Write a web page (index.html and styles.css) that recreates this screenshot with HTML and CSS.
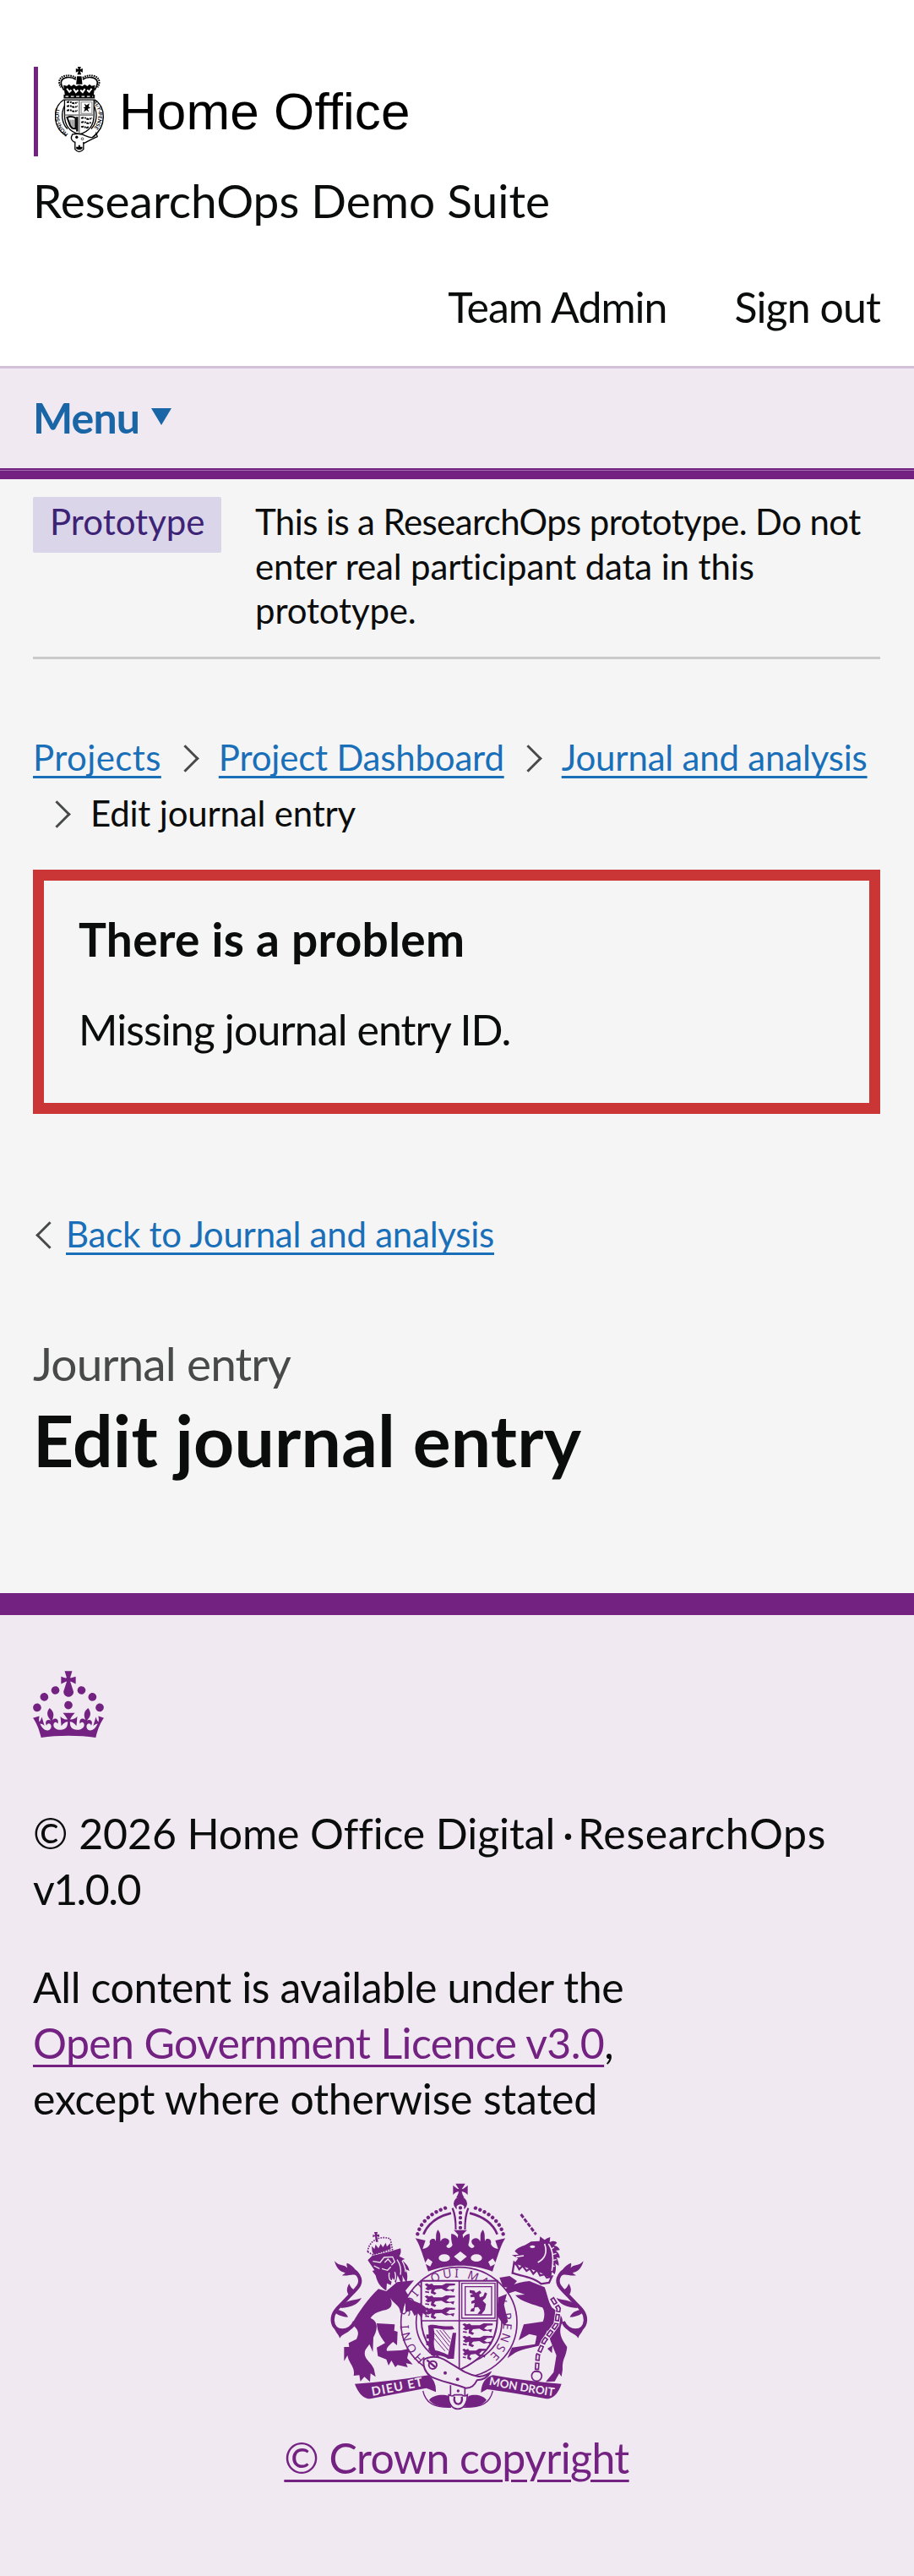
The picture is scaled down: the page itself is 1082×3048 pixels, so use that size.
FILE: index.html
```html
<!DOCTYPE html>
<html lang="en">
<head>
  <meta charset="UTF-8">
  <meta name="viewport" content="width=device-width, initial-scale=1.0">
  <title>Edit journal entry - ResearchOps Demo Suite</title>
  <link rel="stylesheet" href="styles.css">
</head>
<body>
  <header class="header">
    <div class="logo">
      <svg class="logo-crest" viewBox="45 24 176 308" aria-hidden="true">
        <!-- crown -->
        <path d="M125 27h12l-3 9 9-3v14l-9-4 4 12h-14l4-12-9 4V33l9 3z"/>
        <path d="M123 61h16l3 28h-22z"/>
        <g fill="none" stroke="#000" stroke-width="5">
          <path d="M119 72C100 60 72 62 67 80c-2 12 4 20 10 30M143 72c19-12 47-10 52 8 2 12-4 20-10 30"/>
          <path d="M119 66C98 52 62 56 60 80c0 10 4 16 6 20M143 66c21-14 57-10 59 14 0 10-4 16-6 20" stroke-width="6" stroke-dasharray="5 3"/>
        </g>
        <path d="M75 92l12 3 8-6 7 7 10-6 8 6 11-5 11 5 8-6 10 6 7-7 8 6 12-3-5 34H80z"/>
        <path d="M87 104l9 12 7-7M111 105l8 12 8-8M151 105l-8 12-8-8M175 104l-9 12-7-7" fill="none" stroke="#fff" stroke-width="6"/>
        <path d="M76 126q55-8 110 0v13H76z"/>
        <path d="M82 132h98" stroke="#fff" stroke-width="4" stroke-dasharray="11 8"/>
        <!-- garter -->
        <g fill="none" stroke="#000" stroke-width="4">
          <path d="M77 143C35 170 34 240 85 272M185 143c42 27 43 97-6 132"/>
          <path d="M79 165c-14 28-10 62 10 82M183 165c14 28 10 62-10 82"/>
        </g>
        <path id="small-garter" d="M92 265C48 225 52 170 83 142" fill="none"/>
        <path id="small-garter-r" d="M179 150C208 185 207 232 160 265" fill="none"/>
        <text class="garter-small"><textPath href="#small-garter">HONI·SOIT</textPath></text>
        <text class="garter-small"><textPath href="#small-garter-r">AL·Y·PENSE</textPath></text>
        <!-- shield -->
        <path d="M79 144h104v54c0 38-22 60-52 68-30-8-52-30-52-68z" fill="#fff" stroke="#000" stroke-width="4"/>
        <path d="M131 146v118M80 198h102" stroke="#888" stroke-width="5"/>
        <g fill="none" stroke="#000" stroke-width="6" stroke-dasharray="9 3 5 2">
          <path d="M87 153q10-4 18 1t20-2M87 167q10-4 18 1t20-2M87 182q10-4 18 1t20-2"/>
          <path d="M138 209q10-4 18 1t20-2M138 224q10-4 18 1t17-2M138 240q10-4 14 1t12-2"/>
        </g>
        <path d="M138 152h38v40h-38z" fill="none" stroke="#888" stroke-width="3"/>
        <path d="M149 157l8 6 10-7-3 12 7 5-10 3 4 11-9-7-9 7 4-12-6-4 8-2z"/>
        <path d="M88 206q15-6 30 2v38q-18 0-22-18z" fill="none" stroke="#000" stroke-width="6"/>
        <path d="M99 214v22M105 214v26M111 214v26" stroke="#000" stroke-width="2"/>
        <path d="M120 204h7v52h-7z"/>
        <!-- buckle -->
        <path d="M107 266q30-6 48 6 28 14 36-10l4 12q-26 12-48 24-16 4-36-6-14-8-4-26z" fill="#fff" stroke="#000" stroke-width="4"/>
        <circle cx="122" cy="276" r="5"/>
        <circle cx="142" cy="282" r="4" fill="none" stroke="#000" stroke-width="2"/>
        <path d="M116 293v26q14 18 30 0v-26" fill="#fff" stroke="#000" stroke-width="4"/>
        <path d="M128 304h6v6h8v6q-11 9-22 0v-6h8z"/>
      </svg>
      <span class="logo-name">Home Office</span>
    </div>
    <p class="service-name">ResearchOps Demo Suite</p>
    <ul class="account-nav">
      <li class="team">Team Admin</li>
      <li class="sign-out">Sign out</li>
    </ul>
  </header>

  <nav class="service-nav">
    <button type="button" class="menu-button">Menu</button>
  </nav>
  <div class="nav-rule"></div>

  <main class="main">
    <div class="phase-banner">
      <strong class="tag">Prototype</strong>
      <span class="phase-text">This is a ResearchOps prototype. Do not<br><span class="phase-line">enter real participant data in this</span><br><span class="phase-line">prototype.</span></span>
    </div>

    <ol class="breadcrumbs">
      <li><a class="crumb-projects" href="#">Projects</a></li>
      <li><a href="#">Project Dashboard</a></li>
      <li><a href="#">Journal and analysis</a></li>
      <li>Edit journal entry</li>
    </ol>

    <div class="error-summary">
      <h2>There is a problem</h2>
      <p>Missing journal entry ID.</p>
    </div>

    <div class="back">
      <a href="#">Back to Journal and analysis</a>
    </div>

    <span class="caption">Journal entry</span>
    <h1>Edit journal entry</h1>
  </main>

  <footer class="footer">
    <svg class="footer-crown" viewBox="0 0 32 30" aria-hidden="true">
      <path fill="currentColor" d="M22.6 10.4c-1 .4-2-.1-2.4-1-.4-.9.1-2 1-2.4.9-.4 2 .1 2.4 1s-.1 2-1 2.4m-5.9 6.7c-.9.4-2-.1-2.4-1-.4-.9.1-2 1-2.4.9-.4 2 .1 2.4 1s-.1 2-1 2.4m10.8-3.7c-1 .4-2-.1-2.4-1-.4-.9.1-2 1-2.4.9-.4 2 .1 2.4 1s0 2-1 2.4m3.3 4.8c-1 .4-2-.1-2.4-1-.4-.9.1-2 1-2.4.9-.4 2 .1 2.4 1s-.1 2-1 2.4M17 4.7l2.3 1.2V2.5l-2.3.7-.2-.2.9-3h-3.4l.9 3-.2.2c-.1.1-2.3-.7-2.3-.7v3.4L15 4.7c.1.1.1.2.2.2l-1.3 4c-.1.2-.1.4-.1.6 0 1.1.8 2 1.9 2.2h.7c1-.2 1.9-1.1 1.9-2.1 0-.2 0-.4-.1-.6l-1.3-4c-.1-.2 0-.2.1-.3m-7.6 5.7c.9.4 2-.1 2.4-1 .4-.9-.1-2-1-2.4-.9-.4-2 .1-2.4 1s0 2 1 2.4m-5 3c.9.4 2-.1 2.4-1 .4-.9-.1-2-1-2.4-.9-.4-2 .1-2.4 1s.1 2 1 2.4m-3.2 4.8c.9.4 2-.1 2.4-1 .4-.9-.1-2-1-2.4-.9-.4-2 .1-2.4 1s0 2 1 2.4m14.8 11c4.4 0 8.6.3 12.3.8 1.1-4.5 2.4-7 3.7-8.8l-2.5-.9c.2 1.3.3 1.9 0 2.7-.4-.4-.8-1.1-1.1-2.3l-1.2 4c.7-.5 1.3-.8 2-.9-1.1 2.5-2.6 3.1-3.5 3-1.1-.2-1.7-1.2-1.5-2.1.3-1.2 1.5-1.5 2.1-.1 1.1-2.3-.8-3-2-2.3 1.9-1.9 2.1-3.5.6-5.6-2.1 1.6-2.1 3.2-1.2 5.5-1.2-1.4-3.2-.6-2.5 1.6.9-1.4 2.1-.5 1.9.8-.2 1.1-1.7 2.1-3.5 1.9-2.7-.2-2.9-2.1-2.9-3.6.7-.1 1.9.5 2.9 1.9l.4-4.3c-1.1 1.1-2.1 1.4-3.2 1.4.4-1.2 2.1-3 2.1-3h-5.4s1.7 1.9 2.1 3c-1.1 0-2.1-.2-3.2-1.4l.4 4.3c1-1.4 2.2-2 2.9-1.9-.1 1.5-.2 3.4-2.9 3.6-1.9.2-3.4-.8-3.5-1.9-.2-1.3 1-2.2 1.9-.8.7-2.3-1.2-3-2.5-1.6.9-2.2.9-3.9-1.2-5.5-1.5 2-1.3 3.7.6 5.6-1.2-.7-3.1 0-2 2.3.6-1.4 1.8-1.1 2.1.1.2.9-.3 1.9-1.5 2.1-.9.2-2.4-.5-3.5-3 .6 0 1.2.3 2 .9l-1.2-4c-.3 1.1-.7 1.9-1.1 2.3-.3-.8-.2-1.4 0-2.7l-2.9.9C1.3 23 2.6 25.5 3.7 30c3.7-.5 7.9-.8 12.3-.8"/>
    </svg>
    <p class="footer-copy">© 2026 Home Office Digital<span class="dot"> · </span><span class="product">ResearchOps</span> <span class="version">v1.0.0</span></p>
    <p class="licence">All content is available under the<br><a class="ogl" href="#">Open Government Licence v3.0</a>,<br><span class="except">except where otherwise stated</span></p>

    <div class="copyright">
      <svg class="arms" viewBox="45 65 936 810" aria-hidden="true">
        <defs>
          <g id="passant">
            <path d="M0 4l8-4 8 4 10-3 6 6 30 0 14-7 32 1v6l-26 2-8 8 14 6 18-3-4 12-10-6-16 2-16-9-22 2-6 8 10 6-6 6-14-6 2-14-12 4-10-6 8-6z"/>
            <path d="M2 30l14 2M68 22l18-14" fill="none" stroke="#732282" stroke-width="5"/>
          </g>
          <g id="tail">
            <path d="M150 560C135 600 75 605 71 555C69 520 105 500 130 470C160 440 180 425 162 395C150 374 125 372 110 380" fill="none" stroke="#732282" stroke-width="13"/>
            <path d="M78 345C95 365 110 355 124 370C122 362 120 358 122 352C142 358 160 380 160 400C145 385 130 400 104 396C110 392 114 390 116 386C98 384 84 370 78 345zM130 468C118 450 122 440 130 425C136 442 148 450 158 448zM104 500C130 480 150 486 174 476C160 500 140 508 100 512zM88 518C104 520 120 528 126 544C112 544 96 540 82 530zM72 570C90 600 120 596 136 588C118 606 104 604 97 619C92 605 80 598 72 570z"/>
          </g>
        </defs>

        <!-- crown -->
        <path d="M508 70h34c-4 9-10 14-12 20 8-2 14-8 21-14v34c-7-6-13-11-21-12 1 8 4 14 9 22h-29c5-8 8-14 9-22-8 1-14 6-20 12V76c7 6 13 12 21 14-2-6-8-11-12-20z"/>
        <circle cx="525" cy="141" r="24"/>
        <g fill="none" stroke="#732282">
          <path d="M373 249C385 205 425 168 488 152M677 249C665 205 625 168 562 152" stroke-width="13" stroke-linecap="round" stroke-dasharray="0.1 17.5"/>
          <path d="M394 250C408 215 440 188 492 175M656 250C642 215 610 188 558 175" stroke-width="8"/>
          <path d="M497 157c9 22 12 46 12 76M553 157c-9 22-12 46-12 76" stroke-width="7"/>
        </g>
        <path d="M512 150q13-12 26 0v86h-26z" fill="#f0e9f1"/>
        <path d="M525 156v74" fill="none" stroke="#732282" stroke-width="13" stroke-linecap="round" stroke-dasharray="0.1 17.5"/>
        <path d="M365 264l36 8-10 30c14-2 22-8 26-18-4-12 4-20 14-18 4 2 6 6 6 10 4-16-2-26 8-42 14 16 6 26 10 42 4-14 22-16 30-4 2 12-6 14-10 20 6 12 18 6 22-4-4-14-6-26-4-40 12 2 20 8 22 16l2-12c-4-6-10-12-16-17h48c-6 5-12 11-16 17l2 12c2-8 10-14 22-16 2 14 0 26-4 40 4 10 16 16 22 4-4-6-12-8-10-20 8-12 26-10 30 4 4-16-4-26 10-42 10 16 4 26 8 42 0-4 2-8 6-10 10-2 18 6 14 18 4 10 12 16 26 18l-10-30 36-8c-12 16-20 40-46 118-70-28-158-28-228 0C385 304 377 280 365 264z"/>
        <g fill="#f0e9f1">
          <path d="M525 311l23 18-23 19-23-19zM410 336l16 12-8 16-20-10zM640 336l-16 12 8 16 20-10z"/>
          <ellipse cx="468" cy="334" rx="20" ry="13"/>
          <ellipse cx="582" cy="334" rx="20" ry="13"/>
        </g>

        <!-- supporters' tails -->
        <use href="#tail"/>
        <use href="#tail" transform="translate(1040 0) scale(-1 1)"/>

        <!-- lion -->
        <path d="M196 312c2-36 40-60 80-46l8 38-72 18z" fill="none" stroke="#732282" stroke-width="5" stroke-dasharray="5 4"/>
        <path d="M219 242l12 0-2 10 8-2v10l-8-3 4 20h-8l-3-20-8 4v-10l8 3zM212 312l-2-20 10 10 4-16 10 14 8-16 8 12 10-16 4 14 12-12 2 20-60 20z"/>
        <path d="M196 342l16-16 66-16 34-10c4 12 0 22-4 28l20 10-10 4C334 356 340 364 344 380L330 374C338 390 338 400 334 424L318 396C322 412 320 420 316 428L302 396 296 424 284 404 278 430 264 424 262 450C244 440 230 424 224 396L212 380 220 378 196 342z"/>
        <g fill="none" stroke="#f0e9f1" stroke-width="4">
          <path d="M214 346l26 4 14-18 30-2 8 18-12 12M246 372l20 6 12-12M218 362l20 10M256 350l12-12 12 14M272 386c-2 16 0 30 12 30 14 0 12-20 8-32M300 340c14 20 16 34 12 54M318 344c8 14 12 26 12 40"/>
        </g>
        <path d="M234 444L262 452 300 420 360 414 330 450C350 488 380 488 402 510L404 546 388 530 378 546 362 524 342 540 330 520 312 530C310 500 290 500 276 476C286 500 280 512 262 518C230 524 216 532 206 548C236 560 230 590 216 616L214 668 202 640 188 660C176 690 206 700 218 728L224 756 206 744 204 774 184 756 170 772 166 750 146 752C152 720 130 712 124 680L112 700 112 650 130 650 128 636 156 622C172 590 150 580 140 568C168 520 196 480 234 444z"/>
        <path d="M228 566l64 4-2 22 12 4-2 48-14-12c-14 12-26 22-22 32l50-2 30-6-8 34 20 22-24-4 6 14-36-8-8 8-14-24-10 18-8-22-30-12-4-30 30-16c-14-20-28-36-30-70z"/>

        <!-- unicorn -->
        <path d="M740 179l54 72" fill="none" stroke="#732282" stroke-width="9" stroke-dasharray="15 5"/>
        <path d="M718 310C730 296 742 294 756 288L776 276 806 274 808 258 824 270C836 262 838 262 844 260L842 278C856 272 862 274 868 280L858 290C870 292 876 298 878 306L864 308C874 316 878 324 878 334L866 332C872 344 876 354 874 362L862 354C866 370 864 380 860 392L850 384 846 410C828 388 780 376 716 354L730 336 708 324 732 322z"/>
        <path d="M824 284c10 28 6 50-24 66M838 284c18 24 18 60 12 96M722 330l28-4" fill="none" stroke="#f0e9f1" stroke-width="5"/>
        <path d="M858 296l-10 6M866 318l-14 4M866 340l-12 2M860 364l-8-2" stroke="#f0e9f1" stroke-width="4"/>
        <ellipse cx="781" cy="294" rx="9" ry="5" fill="#f0e9f1"/>
        <path d="M716 350l10 10 8 14 12-12 14 18 12-8 12 18 14-14 10 20 16-4 8 12 18-4-10 22-28 4c-24-20-62-28-102-38z" fill="#f0e9f1" stroke="#732282" stroke-width="7"/>
        <path d="M664 404l36-6 26 18-22 26-28-6z"/>
        <path d="M656 540L660 474C676 440 720 420 770 416L824 438C836 470 836 486 850 510C876 530 888 540 888 560C870 600 884 620 904 650C900 690 886 690 888 730L884 756 876 744 860 772 828 774 856 740 866 680C850 640 840 620 834 590L822 620 820 642C790 650 750 656 720 670L692 690 708 652 790 640 796 610 770 604 732 626 750 570 818 560C826 540 824 520 816 510C790 500 740 490 720 466L754 464 720 452 690 462 680 500 692 560 676 572z"/>
        <path d="M834 656l18-12-2 28z"/>
        <path d="M850 476l24 38-8 56-44 60-22 50-4 60" fill="none" stroke="#f0e9f1" stroke-width="21"/>
        <path d="M850 476l24 38-8 56-44 60-22 50-4 60" fill="none" stroke="#732282" stroke-width="16" stroke-dasharray="26 6"/>
        <path d="M850 476l24 38-8 56-44 60-22 50-4 60" fill="none" stroke="#f0e9f1" stroke-width="6" stroke-dasharray="16 16" stroke-dashoffset="-5"/>
        <circle cx="796" cy="753" r="18" fill="none" stroke="#732282" stroke-width="5"/>

        <!-- garter -->
        <ellipse cx="520" cy="563" rx="206" ry="196" fill="#f0e9f1" stroke="#732282" stroke-width="5"/>
        <ellipse cx="520" cy="563" rx="152" ry="146" fill="none" stroke="#732282" stroke-width="5"/>
        <path id="garter" d="M401 690A168 163 0 1 1 560 721" fill="none"/>
        <text class="garter-text"><textPath href="#garter">HONI SOIT QUI MAL Y PENSE</textPath></text>

        <!-- shield -->
        <path d="M386 415h270v134c0 90-60 150-136 183-76-33-134-93-134-183z" fill="#f0e9f1" stroke="#732282" stroke-width="6"/>
        <path d="M521 415v317M386 557h270" stroke="#732282" stroke-width="5"/>
        <use href="#passant" x="398" y="424"/>
        <use href="#passant" x="398" y="467"/>
        <use href="#passant" x="398" y="510"/>
        <use href="#passant" x="532" y="566"/>
        <use href="#passant" x="532" y="610"/>
        <use href="#passant" transform="translate(532 656) scale(.78 1)"/>
        <path d="M530 424h118v124H530zM542 436h94v100h-94z" fill="none" stroke="#732282" stroke-width="4"/>
        <path d="M558 448l16 2 6 8 14-8 6 8-8 6 2 10 12-4 6-14 8 4-6 16-10 10 12 12-4 20-12 16-14-2 10-12-8-12-12 2-2 14-14 0 4-10 8-2 4-18-12 2 0-8 12-6-2-10-12 2-2-8 10-4-12-4z"/>
        <path d="M410 574c20-8 40 6 86 2l8 10c-40 8-54-4-74-2 8 30-6 50 6 78 20 4 42 14 52 20l-10 8c-20-12-40-10-56-10-14-30-6-70-12-106z"/>
        <path d="M498 600l12 0-8 92-24 0z"/>
        <path d="M440 590l46 58M452 590l36 44M464 590l26 32M432 600l50 62M430 618l40 46" stroke="#732282" stroke-width="3"/>
        <path d="M404 606h14v14h-14zM404 630h14v14h-14zM412 652h12v12h-12z"/>

        <!-- paw and hoof over the shield -->
        <path d="M330 470C350 488 380 488 402 510L406 540 392 530 388 548 374 530 362 540 352 520 330 526z"/>
        <path d="M656 540L660 474 690 462 680 500 694 560 680 574z"/>

        <!-- belt and buckle -->
        <path d="M396 694c30-16 60-8 84 8 40 24 60 42 106 52 22 4 30-6 44-12-10 18-26 24-46 26-10 20-20 28-40 28-50-18-90-24-122-40-22-14-32-40-26-62z" fill="#f0e9f1" stroke="#732282" stroke-width="6"/>
        <circle cx="427" cy="714" r="14" fill="none" stroke="#732282" stroke-width="6"/>
        <path d="M406 696l30 26" stroke="#732282" stroke-width="7"/>
        <circle cx="471" cy="742" r="6"/>
        <circle cx="515" cy="765" r="6"/>
        <path d="M490 786v40M541 794v32" stroke="#732282" stroke-width="5"/>
        <circle cx="517" cy="806" r="5"/>

        <!-- scrolls -->
        <path d="M150 781Q290 772 412 750Q440 770 438 810L404 796Q300 815 205 834Q170 834 150 781zM884 781Q760 772 640 750Q600 762 598 812L620 800Q730 815 830 834Q866 834 884 781z"/>
        <path d="M392 806c10 44 40 60 100 58M640 806c-10 44-40 60-106 58" fill="none" stroke="#732282" stroke-width="4"/>
        <path d="M414 838c14-18 50-22 70-14l10 38c-30 4-64-2-80-24zM618 838c-14-18-44-22-64-14l-14 38c30 4 62-2 78-24z"/>
        <path d="M484 820q12 8 20 0h26q10 8 20 0c0 24-10 50-34 50s-36-26-32-50z" fill="#f0e9f1" stroke="#732282" stroke-width="5"/>
        <path d="M504 826c-8 36 34 36 26 0" fill="none" stroke="#732282" stroke-width="7"/>
        <path id="scroll-left" d="M212 824Q310 806 402 786" fill="none"/>
        <path id="scroll-right" d="M626 784Q740 808 860 825" fill="none"/>
        <text class="motto"><textPath href="#scroll-left">DIEU ET</textPath></text>
        <text class="motto motto-right"><textPath href="#scroll-right">MON DROIT</textPath></text>
      </svg>
      <a class="crown-link" href="#">© Crown copyright</a>
    </div>
  </footer>
</body>
</html>
```
FILE: styles.css
```css
* {
  box-sizing: border-box;
}
body {
  margin: 0;
  background: #f5f5f5;
  color: #0b0c0c;
  font-family: Lato, "Noto Sans", sans-serif;
  font-size: 50px;
  line-height: 66px;
  white-space: nowrap;
}
h1, h2, p, ul, ol {
  margin: 0;
  padding: 0;
}
ul, ol {
  list-style: none;
}
a {
  color: #1a6fb9;
  text-decoration: underline;
  text-decoration-thickness: 3px;
  text-underline-offset: 6px;
  text-decoration-skip-ink: none;
}

/* header */
.header {
  height: 433px;
  padding: 79px 40px 0 39px;
  background: #fff;
}
.logo {
  display: flex;
  height: 106px;
  margin-left: 1px;
  border-left: 5px solid #732282;
  color: #000;
}
.logo-crest {
  width: 59px;
  height: 103px;
  margin: -1px 17px 0 20px;
}
.logo-name {
  padding-top: 20px;
  font: 62px/66px "Liberation Sans", Arial, sans-serif;
  letter-spacing: 0.1px;
}
.service-name {
  margin-top: 19px;
  font-size: 55px;
}
.account-nav {
  display: flex;
  justify-content: flex-end;
  gap: 80px;
  margin-top: 60px;
}
.team {
  letter-spacing: -1px;
}
.sign-out {
  letter-spacing: -0.9px;
}

/* navigation */
.service-nav {
  height: 121px;
  padding: 25px 39px 0;
  border-top: 3px solid #d3c1d9;
  background: #f0e9f1;
}
.menu-button {
  display: flex;
  align-items: center;
  gap: 14px;
  padding: 0;
  border: 0;
  background: none;
  color: #1a65a6;
  font: bold 50px/66px Lato, sans-serif;
  letter-spacing: -0.9px;
}
.menu-button::after {
  content: "";
  margin-bottom: 2px;
  border: solid transparent;
  border-width: 20px 12.5px 0;
  border-top-color: #1a65a6;
}
.nav-rule {
  height: 13px;
  background: linear-gradient(#732282 2px, #a26fac 2px, #a26fac 3px, #732282 3px);
}

/* main */
.main {
  height: 1318px;
  padding: 21px 40px 0 39px;
}
.phase-banner {
  display: flex;
  align-items: flex-start;
  height: 192px;
  border-bottom: 3px solid #cacaca;
  font-size: 42px;
  line-height: 52.5px;
}
.tag {
  width: 223px;
  height: 66px;
  margin-right: 40px;
  padding: 3px 0 0 20px;
  border-radius: 2px;
  background: #dbd5e9;
  color: #3d2375;
  font-weight: normal;
}
.phase-text {
  padding-top: 3px;
  letter-spacing: -0.6px;
}
.phase-line {
  letter-spacing: -0.15px;
}
.breadcrumbs {
  display: flex;
  flex-wrap: wrap;
  margin-top: 83px;
  font-size: 42px;
}
.breadcrumbs li {
  display: flex;
  align-items: center;
  letter-spacing: -0.2px;
}
.breadcrumbs .crumb-projects {
  letter-spacing: 0.4px;
}
.breadcrumbs li + li::before {
  content: "";
  width: 20px;
  height: 20px;
  margin: 3px 28px 0 17px;
  border: solid #484949;
  border-width: 3px 3px 0 0;
  transform: rotate(45deg);
}
.error-summary {
  height: 289px;
  margin-top: 34px;
  padding: 36px 41px 0;
  border: 13px solid #ca3535;
}
.error-summary h2 {
  font-size: 55px;
  letter-spacing: 0.35px;
}
.error-summary p {
  margin-top: 41px;
  letter-spacing: -0.9px;
}
.back {
  display: flex;
  align-items: center;
  margin-top: 116px;
  font-size: 42px;
  line-height: 52.5px;
  letter-spacing: -0.25px;
}
.back::before {
  content: "";
  width: 20px;
  height: 20px;
  margin: 3px 8px 0 8px;
  border: solid #484949;
  border-width: 0 0 3px 3px;
  transform: rotate(45deg);
}
.caption {
  display: block;
  margin-top: 93px;
  color: #484949;
  font-size: 55px;
  letter-spacing: -0.9px;
}
h1 {
  margin-top: 12px;
  font-size: 84px;
  line-height: 92px;
  letter-spacing: 0.2px;
}

/* footer */
.footer {
  height: 1163px;
  padding: 66px 40px 0 39px;
  border-top: 26px solid #732282;
  background: #f0e9f1;
}
.footer-crown {
  display: block;
  width: 84px;
  height: 79px;
  color: #732282;
}
.footer-copy {
  margin-top: 81px;
  line-height: 65.6px;
  letter-spacing: -0.1px;
  white-space: normal;
}
.dot {
  letter-spacing: -4px;
}
.product {
  letter-spacing: 0.7px;
}
.version {
  letter-spacing: -1.6px;
}
.licence {
  margin-top: 51px;
  line-height: 65.8px;
  letter-spacing: -0.4px;
}
.footer a {
  color: #732282;
  text-underline-offset: 7px;
}
.ogl {
  letter-spacing: -0.65px;
}
.except {
  letter-spacing: -0.2px;
}
.copyright {
  display: flex;
  flex-direction: column;
  align-items: center;
  margin-top: 65px;
}
.arms {
  width: 312px;
  height: 270px;
  margin-bottom: 23px;
  fill: #732282;
}
.copyright .crown-link {
  letter-spacing: -0.65px;
  text-decoration-skip-ink: auto;
}
.garter-small {
  font: bold 19px Lato, sans-serif;
}
.garter-text {
  font: 42px "Noto Sans", sans-serif;
  letter-spacing: 9px;
}
.motto {
  fill: #f0e9f1;
  font: bold 44px Lato, sans-serif;
  letter-spacing: 3px;
}
.motto-right {
  font-size: 40px;
  letter-spacing: 0;
}
```
